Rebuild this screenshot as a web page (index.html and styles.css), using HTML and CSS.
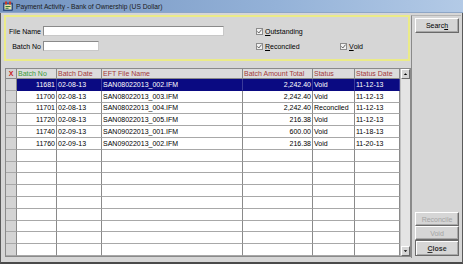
FILE: index.html
```html
<!DOCTYPE html>
<html lang="en">
<head>
    <meta charset="UTF-8">
    <title>Payment Activity</title>
    <link rel="stylesheet" href="styles.css">
</head>
<body>
    <div class="window">
        <div class="titlebar">
            <svg class="app-icon" xmlns="http://www.w3.org/2000/svg" viewBox="0 0 10 10" width="10" height="10">
                <rect x="0.5" y="2" width="9" height="7.5" fill="#2f5fa8" stroke="#1c2f5c" stroke-width="0.6"/>
                <rect x="1.5" y="3.5" width="7" height="5" fill="#e8e0a0"/>
                <rect x="2" y="0.5" width="2" height="3" fill="#c83a2a"/>
                <rect x="6" y="0.5" width="2" height="3" fill="#c83a2a"/>
                <rect x="2.5" y="5" width="5" height="1" fill="#3a7a3a"/>
                <rect x="2.5" y="6.8" width="3" height="1" fill="#3a7a3a"/>
            </svg>
            <span class="title">Payment Activity - Bank of Ownership (US Dollar)</span>
        </div>

        <div class="client">
            <div class="main">
                <div class="filters">
                    <label class="field-label">File Name</label>
                    <div class="input input-wide"></div>
                    <span></span>
                    <div class="check"><span class="box"><svg viewBox="0 0 7 7" width="7" height="7"><polyline points="1.3,3.4 2.8,5 5.6,1.6" fill="none" stroke="#606060" stroke-width="1"/></svg></span><u>O</u>utstanding</div>
                    <span></span>

                    <label class="field-label">Batch No</label>
                    <div class="input input-short"></div>
                    <span></span>
                    <div class="check"><span class="box"><svg viewBox="0 0 7 7" width="7" height="7"><polyline points="1.3,3.4 2.8,5 5.6,1.6" fill="none" stroke="#606060" stroke-width="1"/></svg></span><u>R</u>econciled</div>
                    <div class="check"><span class="box"><svg viewBox="0 0 7 7" width="7" height="7"><polyline points="1.3,3.4 2.8,5 5.6,1.6" fill="none" stroke="#606060" stroke-width="1"/></svg></span><u>V</u>oid</div>
                </div>

                <div class="grid">
                    <table class="batches">
                        <colgroup>
                            <col style="width:11px">
                            <col style="width:40px">
                            <col style="width:45px">
                            <col style="width:141px">
                            <col style="width:70px">
                            <col style="width:42px">
                            <col style="width:45px">
                        </colgroup>
                        <thead>
                            <tr>
                                <th class="sel x-mark">X</th>
                                <th class="sorted">Batch No</th>
                                <th>Batch Date</th>
                                <th>EFT File Name</th>
                                <th>Batch Amount Total</th>
                                <th>Status</th>
                                <th>Status Date</th>
                            </tr>
                        </thead>
                        <tbody>
                            <tr class="selected">
                                <td class="sel"></td><td class="num">11681</td><td>02-08-13</td><td>SAN08022013_002.IFM</td><td class="num">2,242.40</td><td>Void</td><td>11-12-13</td>
                            </tr>
                            <tr>
                                <td class="sel"></td><td class="num">11700</td><td>02-08-13</td><td>SAN08022013_003.IFM</td><td class="num">2,242.40</td><td>Void</td><td>11-12-13</td>
                            </tr>
                            <tr>
                                <td class="sel"></td><td class="num">11701</td><td>02-08-13</td><td>SAN08022013_004.IFM</td><td class="num">2,242.40</td><td>Reconciled</td><td>11-12-13</td>
                            </tr>
                            <tr>
                                <td class="sel"></td><td class="num">11720</td><td>02-08-13</td><td>SAN08022013_005.IFM</td><td class="num">216.38</td><td>Void</td><td>11-12-13</td>
                            </tr>
                            <tr>
                                <td class="sel"></td><td class="num">11740</td><td>02-09-13</td><td>SAN09022013_001.IFM</td><td class="num">600.00</td><td>Void</td><td>11-18-13</td>
                            </tr>
                            <tr>
                                <td class="sel"></td><td class="num">11760</td><td>02-09-13</td><td>SAN09022013_002.IFM</td><td class="num">216.38</td><td>Void</td><td>11-20-13</td>
                            </tr>
                            <tr><td class="sel"></td><td></td><td></td><td></td><td></td><td></td><td></td></tr>
                            <tr><td class="sel"></td><td></td><td></td><td></td><td></td><td></td><td></td></tr>
                            <tr><td class="sel"></td><td></td><td></td><td></td><td></td><td></td><td></td></tr>
                            <tr><td class="sel"></td><td></td><td></td><td></td><td></td><td></td><td></td></tr>
                            <tr><td class="sel"></td><td></td><td></td><td></td><td></td><td></td><td></td></tr>
                            <tr><td class="sel"></td><td></td><td></td><td></td><td></td><td></td><td></td></tr>
                            <tr><td class="sel"></td><td></td><td></td><td></td><td></td><td></td><td></td></tr>
                            <tr><td class="sel"></td><td></td><td></td><td></td><td></td><td></td><td></td></tr>
                            <tr><td class="sel"></td><td></td><td></td><td></td><td></td><td></td><td></td></tr>
                        </tbody>
                    </table>
                    <div class="scrollbar">
                        <div class="arrow"><svg viewBox="0 0 8 8" width="8" height="8"><polygon points="2,5 6,5 4,3" fill="#000"/></svg></div>
                        <div class="track"></div>
                        <div class="arrow"><svg viewBox="0 0 8 8" width="8" height="8"><polygon points="2,3 6,3 4,5" fill="#000"/></svg></div>
                    </div>
                </div>
            </div>

            <div class="side">
                <button class="btn">Searc<u>h</u></button>
                <div class="side-spacer"></div>
                <button class="btn" disabled>Reconcile</button>
                <button class="btn" disabled>Void</button>
                <button class="btn btn-default"><u>C</u>lose</button>
            </div>
        </div>
    </div>
</body>
</html>
```

FILE: styles.css
```css
/* Reset */
* {
    margin: 0;
    padding: 0;
    box-sizing: border-box;
}

body {
    font-family: "Liberation Sans", Arial, sans-serif;
    font-size: 7px;
    color: #000;
    background-color: #d6d6d6;
}

/* Window frame */
.window {
    width: 463px;
    height: 264px;
    display: flex;
    flex-direction: column;
    background-color: #d6d6d6;
    border-left: 1px solid #5a5a5a;
    border-right: 1px solid #5a5a5a;
    border-bottom: 2px solid #4a4a4a;
}

.titlebar {
    height: 13px;
    margin-left: -1px;
    margin-right: -1px;
    display: flex;
    align-items: center;
    padding-left: 3px;
    background: linear-gradient(to right, #7393c0, #94b2d8 60%, #b3cae6);
    border-bottom: 1px solid #8ea6c6;
}

.app-icon {
    flex-shrink: 0;
}

.title {
    margin-left: 3px;
    font-size: 6.7px;
    color: #1a1a1a;
    white-space: nowrap;
}

.client {
    flex: 1;
    display: flex;
    padding: 2px 1px 4px 3px;
}

/* Left column: filter box + grid */
.main {
    width: 408px;
    display: flex;
    flex-direction: column;
}

.filters {
    width: 406px;
    height: 46px;
    border: 2px solid #ebeb88;
    padding: 9px 0 0 0;
    display: grid;
    grid-template-columns: 35px 183px 32px 84px 1fr;
    grid-template-rows: 10px 10px;
    row-gap: 5px;
    align-items: center;
}

.field-label {
    text-align: right;
    white-space: nowrap;
}

.input {
    margin-left: 2px;
    height: 10px;
    background-color: #fff;
    border: 1px solid #8a8a8a;
    border-right-color: #c8c8c8;
    border-bottom-color: #c8c8c8;
}

.input-wide {
    width: 181px;
}

.input-short {
    width: 56px;
}

.check {
    display: flex;
    align-items: center;
    white-space: nowrap;
}

.check .box {
    width: 7px;
    height: 7px;
    margin-right: 2px;
    background-color: #f2f2f2;
    border: 1px solid #8c8c8c;
    display: flex;
    align-items: center;
    justify-content: center;
}

.check .box svg {
    display: block;
    flex-shrink: 0;
}

/* Batch grid */
.grid {
    margin-top: 7px;
    margin-left: 1px;
    width: 406px;
    height: 189px;
    display: flex;
    border: 1px solid #8a8a8a;
    background-color: #fff;
}

.batches {
    width: 394px;
    table-layout: fixed;
    border-collapse: separate;
    border-spacing: 0;
}

.batches th,
.batches td {
    border-right: 1px solid #8a8a8a;
    border-bottom: 1px solid #a8a8a8;
    padding: 0 1px;
    white-space: nowrap;
    overflow: hidden;
    text-align: left;
    font-weight: normal;
}

.batches th {
    height: 10px;
    background-color: #dcdcdc;
    color: #a33a3a;
    border-bottom-color: #8a8a8a;
}

.batches th.sorted {
    color: #3a9a3a;
}

.batches th.x-mark {
    color: #c82020;
    font-weight: bold;
    text-align: center;
}

.batches td {
    height: 11.8px;
}

.batches .sel {
    background-color: #d4d4d4;
}

.batches .num {
    text-align: right;
}

.batches tr.selected td {
    background-color: #0a0a82;
    color: #fff;
    border-right-color: #3a3a9a;
    border-bottom-color: #0a0a82;
}

.batches tr.selected td.sel {
    background-color: #d4d4d4;
    border-right-color: #8a8a8a;
    border-bottom-color: #a8a8a8;
}

.scrollbar {
    width: 10px;
    display: flex;
    flex-direction: column;
    background-color: #e4e4e4;
    border-left: 1px solid #c0c0c0;
}

.arrow {
    height: 10px;
    display: flex;
    align-items: center;
    justify-content: center;
    background-color: #d6d6d6;
    border: 1px solid #fff;
    border-right-color: #6a6a6a;
    border-bottom-color: #6a6a6a;
}

.track {
    flex: 1;
}

/* Right button column */
.side {
    width: 50px;
    margin-left: 0;
    height: 243px;
    display: flex;
    flex-direction: column;
    padding: 2px 2px 2px 3px;
    border-left: 1px solid #8a8a8a;
    border-top: 1px solid #b4b4b4;
}

.side-spacer {
    flex: 1;
}

.btn {
    width: 44px;
    height: 14px;
    font-family: "Liberation Sans", Arial, sans-serif;
    font-size: 7px;
    color: #000;
    background-color: #d6d6d6;
    border: 1px solid #fff;
    border-right-color: #6a6a6a;
    border-bottom-color: #6a6a6a;
    box-shadow: inset -1px -1px 0 #a8a8a8;
}

.btn:first-child {
    height: 15px;
}

.btn:disabled {
    color: #a4a4a4;
}

.btn-default {
    height: 16px;
    font-weight: bold;
    color: #333;
    border: 1px solid #6a6a6a;
    box-shadow: inset 1px 1px 0 #fff, inset -1px -1px 0 #a8a8a8;
}
```
